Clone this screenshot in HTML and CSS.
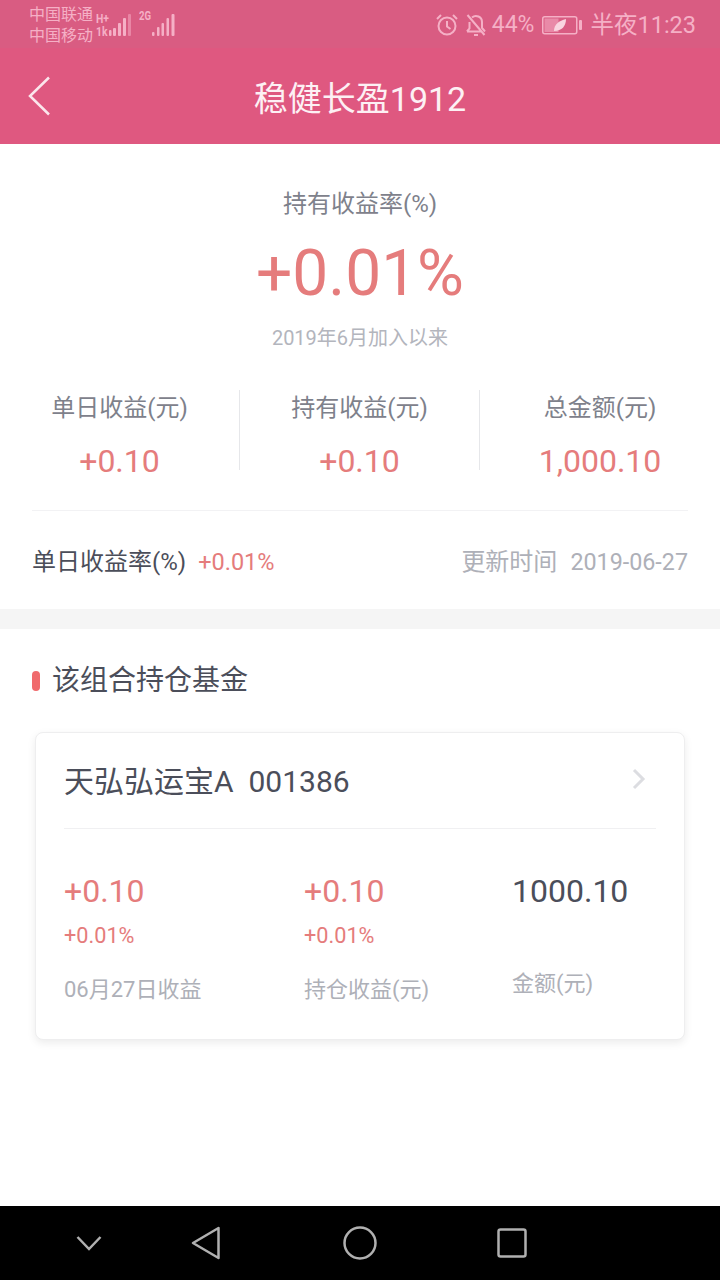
FILE: index.html
```html
<!DOCTYPE html>
<html lang="zh">
<head>
<meta charset="utf-8">
<title>稳健长盈1912</title>
<link rel="stylesheet" href="styles.css">
</head>
<body>
<div class="page">
  <header class="top">
    <div class="status">
      <div class="carriers"><span>中国联通</span><span>中国移动</span></div>
      <div class="sig">
        <div class="net"><span>H+</span><span>1k</span></div>
        <svg class="bars" width="23" height="24" viewBox="0 0 23 24"><g fill="#f5b0c6"><rect x="0" y="17" width="2.500" height="6" rx="1"/><rect x="4" y="15" width="3" height="8" rx="1"/><rect x="9" y="10" width="3" height="13" rx="1"/><rect x="14" y="5" width="3" height="18" rx="1"/></g><rect x="19" y="1" width="3" height="22" rx="1" fill="#e986a5"/></svg>
        <span class="net2">2G</span>
        <svg class="bars2" width="23" height="24" viewBox="0 0 23 24"><g fill="#f5b0c6"><rect x="0" y="19" width="2.500" height="4" rx="1"/><rect x="5" y="14" width="2.500" height="9" rx="1"/><rect x="9.500" y="10" width="2.500" height="13" rx="1"/><rect x="14.500" y="5" width="2.500" height="18" rx="1"/><rect x="19.500" y="1" width="3" height="22" rx="1"/></g></svg>
      </div>
      <div class="right">
        <svg width="22" height="22" viewBox="0 0 22 22" fill="none" stroke="#f5b0c6" stroke-width="2"><circle cx="11" cy="12" r="8.500"/><path d="M11 7v5.500l3.500 2.500M1 5l4-4M21 5l-4-4"/></svg>
        <svg width="20" height="22" viewBox="0 0 20 22" fill="none" stroke="#f5b0c6" stroke-width="2"><path d="M1 17.500h15M6 3.500A6 6 0 0 1 16 8v6l3 3.500M3.500 8v6.500L1 17.500M8 21h4M1.500 1l17 20"/></svg>
        <span class="pct">44%</span>
        <svg width="40" height="24" viewBox="0 0 40 24"><rect x="0.750" y="3.750" width="34" height="17" rx="2" fill="none" stroke="#f5b0c6" stroke-width="1.500"/><rect x="2.500" y="5.500" width="14" height="13.500" fill="#e98aa8"/><rect x="37" y="7" width="3" height="10" rx="1" fill="#f5b0c6"/><path d="M12 18c0-7 5-10 12-12 0 7-4 12-12 12z" fill="#f9d5e0"/></svg>
        <span class="clock">半夜11:23</span>
      </div>
    </div>
    <div class="title-row">
      <svg class="back" width="24" height="40" viewBox="0 0 24 40" fill="none" stroke="#fbe6ec" stroke-width="2.500"><path d="M21 1.500 2 20l19 18.500"/></svg>
      <h1 class="title">稳健长盈1912</h1>
    </div>
  </header>

  <section class="summary">
    <div class="s-label">持有收益率(%)</div>
    <div class="s-value">+0.01%</div>
    <div class="s-since">2019年6月加入以来</div>
    <div class="stats">
      <div class="stat"><div class="stat-l">单日收益(元)</div><div class="stat-v">+0.10</div></div>
      <div class="stat"><div class="stat-l">持有收益(元)</div><div class="stat-v">+0.10</div></div>
      <div class="stat"><div class="stat-l">总金额(元)</div><div class="stat-v">1,000.10</div></div>
    </div>
    <div class="daily">
      <span class="daily-l">单日收益率(%)</span>
      <span class="daily-v">+0.01%</span>
      <span class="daily-t">更新时间<span class="daily-d">2019-06-27</span></span>
    </div>
  </section>

  <section class="holdings">
    <h2 class="h-title"><i class="mark"></i>该组合持仓基金</h2>
    <div class="card">
      <div class="card-head">
        <span class="fund">天弘弘运宝A&nbsp;&nbsp;001386</span>
        <svg width="14" height="22" viewBox="0 0 14 22" fill="none" stroke="#dcdde1" stroke-width="3"><path d="M2 2l9 9-9 9"/></svg>
      </div>
      <div class="cols">
        <div class="col c1"><div class="v red">+0.10</div><div class="p">+0.01%</div><div class="l">06月27日收益</div></div>
        <div class="col c2"><div class="v red">+0.10</div><div class="p">+0.01%</div><div class="l">持仓收益(元)</div></div>
        <div class="col c3"><div class="v dark">1000.10</div><div class="l l3">金额(元)</div></div>
      </div>
    </div>
  </section>

  <nav class="nav">
    <svg width="26" height="16" viewBox="0 0 26 16" fill="none" stroke="#b0b0b0" stroke-width="2.500"><path d="M1.500 2 13 14 24.500 2"/></svg>
    <svg width="30" height="34" viewBox="0 0 30 34" fill="none" stroke="#b0b0b0" stroke-width="2.500" stroke-linejoin="round"><path d="M27.500 2v30L2 17z"/></svg>
    <svg width="34" height="34" viewBox="0 0 34 34" fill="none" stroke="#b0b0b0" stroke-width="2.500"><circle cx="17" cy="17" r="15.500"/></svg>
    <svg width="30" height="30" viewBox="0 0 30 30" fill="none" stroke="#b0b0b0" stroke-width="2.500" stroke-linejoin="round"><rect x="1.500" y="1.500" width="27" height="27" rx="2"/></svg>
  </nav>
</div>
</body>
</html>
```

FILE: styles.css
```css
* { box-sizing: border-box; margin: 0; padding: 0; }
html, body { width: 720px; height: 1280px; background: #fff; overflow: hidden; }
body { font-family: Roboto, "Noto Sans CJK SC", sans-serif; }
.page { width: 720px; height: 1280px; display: flex; flex-direction: column; }

.top { height: 144px; background: #df5880; display: flex; flex-direction: column; }
.status { height: 48px; background: #d95c82; display: flex; align-items: center; padding: 1px 24px 0 29px; color: #f5b0c6; }
.carriers { display: flex; flex-direction: column; font-size: 16px; line-height: 21px; width: 67px; }
.sig { display: flex; align-items: center; height: 48px; }
.net { display: flex; flex-direction: column; font-size: 13px; line-height: 13px; font-weight: 700; width: 13px; }
.net span, .net2 { transform: scaleX(0.8); transform-origin: left center; }
.net2 { font-size: 12px; line-height: 14px; font-weight: 700; width: 13px; margin: -18px 0 0 7px; }
.right { margin-left: auto; display: flex; align-items: center; gap: 8px; }
.pct { font-size: 23px; line-height: 30px; margin-left: -2px; }
.clock { font-size: 23.500px; line-height: 30px; }
.title-row { flex: 1; display: flex; align-items: center; justify-content: center; position: relative; }
.back { position: absolute; left: 28px; top: 28px; }
.title { font-size: 34px; font-weight: 400; color: #fdf0f4; }

.summary { height: 465px; padding-top: 44px; display: flex; flex-direction: column; align-items: center; }
.s-label { font-size: 24px; line-height: 32px; color: #7e818b; }
.s-value { font-size: 64px; line-height: 80px; color: #e57c7c; margin-top: 14px; }
.s-since { font-size: 20px; line-height: 28px; color: #b3b5bd; margin-top: 10px; }
.stats { width: 100%; display: grid; grid-template-columns: 239px 240px 241px; grid-template-rows: 80px; margin-top: 38px; }
.stat { display: flex; flex-direction: column; align-items: center; border-left: 1px solid #e6e7ea; }
.stat:first-child { border-left: 0; }
.stat-l { font-size: 24px; line-height: 34px; color: #7e818b; padding-top: 1px; height: 35px; }
.stat-v { font-size: 32px; line-height: 40px; color: #e57c7c; margin-top: 16px; }
.daily { width: 656px; margin-top: 40px; border-top: 1px solid #f2f2f4; height: 99px; padding-top: 4px; display: flex; align-items: center; }
.daily-l { font-size: 24px; line-height: 32px; color: #4b4e5a; }
.daily-v { font-size: 23.500px; line-height: 32px; color: #e57c7c; margin-left: 12px; }
.daily-t { font-size: 24px; line-height: 32px; color: #aeb0b8; margin-left: auto; }
.daily-d { font-size: 23.300px; margin-left: 13px; }

.holdings { flex: 1; border-top: 20px solid #f5f5f5; padding: 30px 35px 0; }
.h-title { font-size: 28px; line-height: 44px; font-weight: 400; color: #4b4e5a; display: flex; align-items: center; gap: 12px; margin-left: -3px; }
.mark { width: 8px; height: 20px; border-radius: 4px; background: #f06a6c; }
.card { height: 308px; margin-top: 29px; border: 1px solid #eeeeef; border-radius: 8px; box-shadow: 0 3px 8px rgba(0, 0, 0, 0.08); padding: 0 28px; background: #fff; }
.card-head { height: 96px; display: flex; align-items: center; justify-content: space-between; border-bottom: 1px solid #f0f0f2; padding: 0 10px 3px 0; }
.fund { font-size: 30px; color: #4b4e5a; }
.cols { display: flex; padding-top: 42px; }
.col { display: flex; flex-direction: column; flex: none; }
.c1, .c2 { width: 240px; }
.c3 { width: 170px; margin-left: -32px; }
.v { font-size: 32px; line-height: 40px; }
.red { color: #e57c7c; }
.dark { color: #4b4e5a; }
.p { font-size: 21.700px; line-height: 30px; color: #e57c7c; margin-top: 10px; }
.l { font-size: 22px; line-height: 30px; color: #aeb0b8; margin-top: 24px; }
.l3 { margin-top: 58px; }

.nav { height: 74px; background: #000; display: grid; grid-template-columns: 115px 152px 154px 30px; align-items: center; padding-left: 76px; }
```
